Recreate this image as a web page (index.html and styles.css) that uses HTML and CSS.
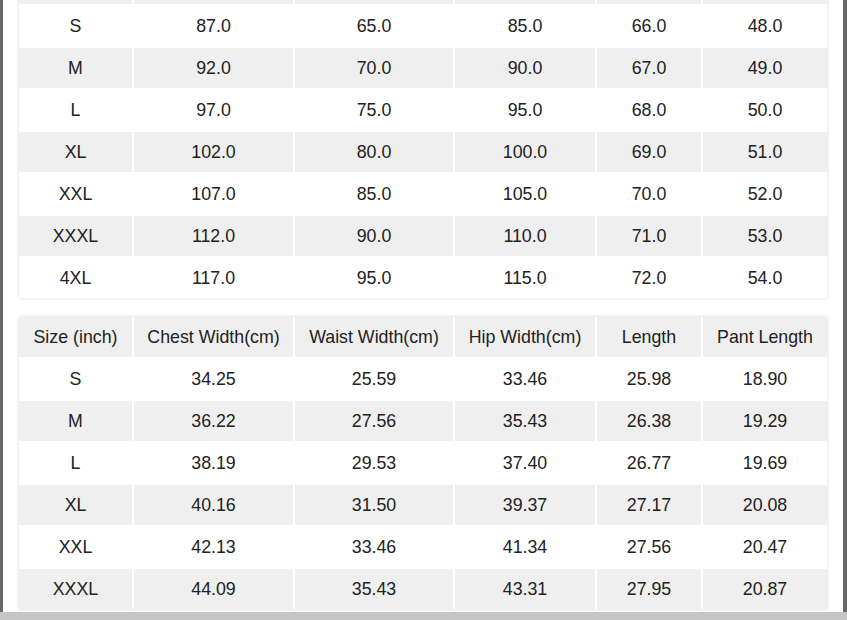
FILE: index.html
```html
<!DOCTYPE html>
<html>
<head>
<meta charset="utf-8">
<link rel="stylesheet" href="styles.css">
</head>
<body>
<div class="screen">
  <div class="main">
    <div class="bar-left"></div>
    <div class="content">
      <div class="card card-first">
        <table class="sizes">
          <colgroup><col class="c1"><col class="c2"><col class="c3"><col class="c4"><col class="c5"><col class="c6"></colgroup>
          <tr class="stub"><td></td><td></td><td></td><td></td><td></td><td></td></tr>
          <tr><td>S</td><td>87.0</td><td>65.0</td><td>85.0</td><td>66.0</td><td>48.0</td></tr>
          <tr><td>M</td><td>92.0</td><td>70.0</td><td>90.0</td><td>67.0</td><td>49.0</td></tr>
          <tr><td>L</td><td>97.0</td><td>75.0</td><td>95.0</td><td>68.0</td><td>50.0</td></tr>
          <tr><td>XL</td><td>102.0</td><td>80.0</td><td>100.0</td><td>69.0</td><td>51.0</td></tr>
          <tr><td>XXL</td><td>107.0</td><td>85.0</td><td>105.0</td><td>70.0</td><td>52.0</td></tr>
          <tr><td>XXXL</td><td>112.0</td><td>90.0</td><td>110.0</td><td>71.0</td><td>53.0</td></tr>
          <tr><td>4XL</td><td>117.0</td><td>95.0</td><td>115.0</td><td>72.0</td><td>54.0</td></tr>
        </table>
      </div>
      <div class="card">
        <table class="sizes">
          <colgroup><col class="c1"><col class="c2"><col class="c3"><col class="c4"><col class="c5"><col class="c6"></colgroup>
          <tr><td>Size (inch)</td><td>Chest Width(cm)</td><td>Waist Width(cm)</td><td>Hip Width(cm)</td><td>Length</td><td>Pant Length</td></tr>
          <tr><td>S</td><td>34.25</td><td>25.59</td><td>33.46</td><td>25.98</td><td>18.90</td></tr>
          <tr><td>M</td><td>36.22</td><td>27.56</td><td>35.43</td><td>26.38</td><td>19.29</td></tr>
          <tr><td>L</td><td>38.19</td><td>29.53</td><td>37.40</td><td>26.77</td><td>19.69</td></tr>
          <tr><td>XL</td><td>40.16</td><td>31.50</td><td>39.37</td><td>27.17</td><td>20.08</td></tr>
          <tr><td>XXL</td><td>42.13</td><td>33.46</td><td>41.34</td><td>27.56</td><td>20.47</td></tr>
          <tr><td>XXXL</td><td>44.09</td><td>35.43</td><td>43.31</td><td>27.95</td><td>20.87</td></tr>
        </table>
      </div>
    </div>
    <div class="bar-right"></div>
  </div>
  <div class="bottom"></div>
</div>
</body>
</html>
```

FILE: styles.css
```css
html, body {
  margin: 0;
  padding: 0;
  background: #ffffff;
  overflow: hidden;
}

.screen {
  width: 847px;
  height: 620px;
  display: flex;
  flex-direction: column;
  overflow: hidden;
}

.main {
  flex: 1;
  display: flex;
  min-height: 0;
  overflow: hidden;
}

.bar-left {
  width: 3px;
  background: #676767;
}

.bar-right {
  width: 4px;
  background: #676767;
}

.content {
  flex: 1;
  padding: 0 16px;
  min-width: 0;
}

.bottom {
  height: 8px;
  background: #c6c6c6;
}

.card {
  background: #ffffff;
  box-shadow: 0 0 4px rgba(0, 0, 0, 0.16);
  overflow: hidden;
  margin-bottom: 19px;
}

.card-first {
  margin-top: -36px;
}

.sizes {
  border-collapse: separate;
  border-spacing: 2px;
  margin: -2px;
  width: calc(100% + 4px);
  table-layout: fixed;
  font-family: "Liberation Sans", Arial, sans-serif;
  font-size: 17.8px;
  color: #222222;
}

.c1 { width: 113px; }
.c2 { width: 159px; }
.c3 { width: 158px; }
.c4 { width: 140px; }
.c5 { width: 104px; }
.c6 { width: 124px; }

.sizes td {
  height: 40px;
  padding: 0;
  text-align: center;
  vertical-align: middle;
  white-space: nowrap;
}

.sizes tr:nth-child(odd) td {
  background: #efefef;
}
```
